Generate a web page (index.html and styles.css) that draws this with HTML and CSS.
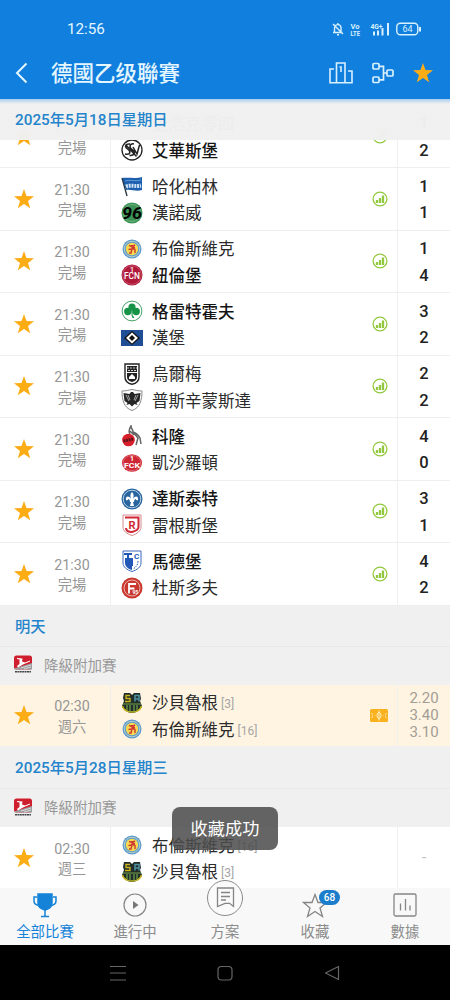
FILE: index.html
```html
<!DOCTYPE html>
<html lang="zh-CN">
<head>
    <meta charset="UTF-8">
    <title>德國乙级聯賽</title>
    <meta name="viewport" content="width=device-width, initial-scale=1">
    <link rel="stylesheet" href="styles.css">
</head>
<body>
<svg class="defs">
    <symbol id="star" viewBox="0 0 20 20"><path fill="#fcac14" d="M10 0l2.500 7.100 7.500.2-6 4.600 2.200 7.300L10 14.900l-6.200 4.300L6 11.900 0 7.300l7.500-.2z"/></symbol>
    <symbol id="chart" viewBox="0 0 16 16"><g fill="none" stroke="#93c83e"><circle cx="8" cy="8" r="6.900" stroke-width="1.300"/><path stroke-width="2.300" d="M5 12V9M8 12V7M11 12V4.500"/></g></symbol>
    <symbol id="elversberg" viewBox="0 0 22 22"><circle cx="11" cy="11" r="10" fill="#fff" stroke="#222" stroke-width="1.300"/><path fill="none" stroke="#222" stroke-width="1.500" d="M9 5C4 4.500 3.500 8 6.500 10s4 6-2.500 5M13 5c-5-1-5 4-1.500 6s2 6-3 5.500M12 8l4 7 2.500-9M4.500 5.500l11 12"/></symbol>
    <symbol id="hertha" viewBox="0 0 22 22"><path fill="#1d5fae" d="M1 3c7-1 13 1 20-1v13c-6 2-11-1-16 0z"/><path stroke="#234" stroke-width="1.300" d="M1 3l5 18"/><path stroke="#cfe2f5" stroke-width="4" stroke-dasharray="2 .8" fill="none" d="M5 11.500c5-2 10 .5 15-1"/><path stroke="#5c9bd8" d="M4 6c5-2 11 1 16-1" fill="none"/></symbol>
    <symbol id="hannover" viewBox="0 0 22 22"><circle cx="11" cy="11" r="10.500" fill="#3c9456"/><circle cx="11" cy="11" r="8.500" fill="none" stroke="#7bb98a" stroke-width=".8"/><text x="11" y="17" text-anchor="middle" textLength="20" lengthAdjust="spacingAndGlyphs" font-size="17" font-weight="bold" font-style="italic">96</text></symbol>
    <symbol id="braunschweig" viewBox="0 0 22 22"><circle cx="11" cy="11" r="9.500" fill="#5d9bd0"/><circle cx="11" cy="11" r="7.800" fill="none" stroke="#b8cfc2" stroke-width="1"/><circle cx="11" cy="11" r="6.200" fill="#f6d94f"/><path fill="none" stroke="#cf3a32" stroke-width="1.400" d="M8 7.500l3 1 3-1.500M11 7v4l-3.500.500M11 10l3 1.500v3.500M11 11l-1 4H8M14 9.500h-3"/></symbol>
    <symbol id="nuernberg" viewBox="0 0 22 22"><circle cx="11" cy="11" r="10.500" fill="#b0193a"/><circle cx="11" cy="11" r="9.300" fill="none" stroke="#cf7486" stroke-width=".6"/><text x="11" y="7.500" text-anchor="middle" font-size="7" fill="#fff">1</text><text x="11" y="14.500" text-anchor="middle" textLength="16" lengthAdjust="spacingAndGlyphs" font-size="8.500" font-weight="500" fill="#fff">FCN</text></symbol>
    <symbol id="fuerth" viewBox="0 0 22 22"><circle cx="11" cy="11" r="9.900" fill="#fff" stroke="#46a36a" stroke-width="1"/><g fill="#159447"><circle cx="11" cy="7" r="3.600"/><circle cx="6.800" cy="11.500" r="3.700"/><circle cx="15.200" cy="11.500" r="3.700"/><path d="M10.500 9h1.500l-.5 6 2 3h-2l-1-3z"/></g></symbol>
    <symbol id="hsv" viewBox="0 0 22 22"><path fill="#1f4e94" d="M0 3h22v16H0z"/><path fill="#111" d="M11 4l8 7-8 7-8-7z"/><path fill="#fff" d="M11 5.500l6 5.500-6 5.500L5 11z"/><path fill="#111" d="M11 8l3 3-3 3-3-3z"/></symbol>
    <symbol id="ulm" viewBox="0 0 22 22"><path fill="#fff" stroke="#222" stroke-width="1.400" d="M4 1h14v13c0 4-3 6.500-7 7.300-4-.8-7-3.300-7-7.300z"/><path fill="#222" d="M6 3h10v6H6z"/><path stroke="#fff" stroke-width=".8" stroke-dasharray="2 1" d="M6 5h10M7 7.500h8"/><path fill="#222" d="M6 10h10v4c0 3-2 4-5 5-3-1-5-2-5-5z"/><path fill="#fff" d="M8 16v-2l3-3 3 3v2z"/></symbol>
    <symbol id="preussen" viewBox="0 0 22 22"><path fill="#fff" stroke="#888" d="M1 2c4 0 7-1 10-1.500 3 .5 6 1.500 10 1.500 0 9-2 17-10 19.500C3 19 1 11 1 2z"/><path fill="#262626" d="M2.500 4l6 1 1.500-2h2l1.500 2 6-1-1 8-3 2 1 2-3-1-2.500 2.500L8.500 15l-3 1 1-2-3-2z"/><path stroke="#fff" stroke-width=".6" d="M5 6l3 6M7 6l2 5M17 6l-3 6M15 6l-2 5"/></symbol>
    <symbol id="koeln" viewBox="0 0 22 22"><path fill="none" stroke="#666" stroke-width="1.500" d="M9 9C7 6 8 4 10 1c0 3 2 3 2 6 3 1 5 2 7 6l1 6M12 7l5 6-2 7M9 6l4 4"/><circle cx="7.500" cy="15" r="6.300" fill="#d71f2c"/><path stroke="#631219" stroke-width="3" stroke-dasharray="2 .6" d="M2.500 16l10-2"/></symbol>
    <symbol id="lautern" viewBox="0 0 22 22"><ellipse cx="11" cy="11" rx="10" ry="8.800" fill="#cf2634"/><ellipse cx="11" cy="11" rx="8.800" ry="7.600" fill="none" stroke="#e18b91" stroke-width=".6"/><text x="11" y="9" text-anchor="middle" font-size="7" font-weight="bold" fill="#fff">1</text><text x="11" y="16" text-anchor="middle" textLength="16" lengthAdjust="spacingAndGlyphs" font-size="8" font-weight="bold" fill="#fff">FCK</text></symbol>
    <symbol id="darmstadt" viewBox="0 0 22 22"><circle cx="11" cy="11" r="10.500" fill="#28649e"/><circle cx="11" cy="11" r="8.800" fill="none" stroke="#b1cee5"/><path fill="#fff" d="M11 4c2 2 2 4 1 7 2-4 6-3 5 1-1 1-2 0-2-1-1 0-2 1-2 3h-1l1 4h-4l1-4H9c0-2-1-3-2-3 0 1-1 2-2 1-1-4 3-5 5-1-1-3-1-5 1-7z"/></symbol>
    <symbol id="regensburg" viewBox="0 0 22 22"><path fill="#fff" stroke="#d98a90" d="M2 1h18v12c0 4-4 7-9 8.500C6 20 2 17 2 13z"/><path fill="none" stroke="#d02835" stroke-width="2" d="M4 3.500h13.500V13c0 3-3 4-6.500 5-4 0-6-1-6-4"/><text x="11" y="14.500" text-anchor="middle" font-size="11" font-weight="bold" fill="#d02835">R</text></symbol>
    <symbol id="magdeburg" viewBox="0 0 22 22"><path fill="#fff" stroke="#3c69bd" d="M2 1h18v12c0 4-4 7-9 8.500C6 20 2 17 2 13z"/><path fill="#2158b7" d="M3 3h8v2H8v3h4v8h-1v4c-4-1-7-4-7-7V8h2V5H3z"/><text x="15.500" y="9" text-anchor="middle" font-size="8" font-weight="bold" fill="#2158b7">C</text><path stroke="#2158b7" stroke-dasharray="1.500 1" d="M17 11c0 4-2 6-5 8" fill="none"/></symbol>
    <symbol id="fortuna" viewBox="0 0 22 22"><circle cx="11" cy="11" r="10.500" fill="#c9372f"/><circle cx="11" cy="11" r="8" fill="none" stroke="#f3cfcc" stroke-width=".8"/><path fill="none" stroke="#fff" stroke-width="1.800" d="M8 16.500V7h7M8 11.500h5.500"/><text x="11.500" y="17" font-size="5" font-weight="bold" fill="#fff">95</text></symbol>
    <symbol id="saar" viewBox="0 0 22 22"><path fill="#202d28" d="M3 1h6l2 2 2-2h6l1 6-1 2 2 5c-1 4-6 7-10 7S2 18 1 14l2-5-1-3z"/><path fill="none" stroke="#c9b51f" stroke-width="1.400" d="M9 3.500H5v3h4v3H4M1.500 14c2 8 17 8 19 0"/><path fill="none" stroke="#4d91a1" stroke-width="1.500" d="M14 9.500v-6h4v6M14 7h4"/><path stroke="#75a34b" stroke-width="1.200" d="M2 12h18M6 13v5M9 13v7M13 13v7M16 13v5"/></symbol>
    <symbol id="bundesliga" viewBox="0 0 18 18"><rect width="18" height="14" y=".5" rx="2.500" fill="#cf1f2e"/><path fill="#9a9da0" d="M0 13.500L18 8v6.500H1z"/><path fill="#fff" d="M3 11l2.500-2V4.500L3 4V3l5.500.5L8 6.500l3 1 5-2v1L9 9.500l-5 3z"/><path stroke="#fff" stroke-width=".6" d="M7 13l10-3M10 14l7-2"/><path stroke="#44474a" stroke-width="1.500" stroke-dasharray="2 .4" d="M1 16.700h16"/></symbol>
</svg>

<div class="app">
    <header class="top">
        <div class="status">
            <span class="clock">12:56</span>
            <svg class="status-icons" width="94" height="18" viewBox="0 0 94 18" fill="none" stroke="#d9f1ff">
                <path stroke-width="1.400" d="M2 12.500h9.500M3.500 12V8.500c0-5 6-5 6.500-1v5M6 14.700h2M2 4l10 10M6.800 4V3"/>
                <text x="19.500" y="8.800" textLength="9" lengthAdjust="spacingAndGlyphs" class="tiny">Vo</text>
                <text x="19.500" y="15.500" textLength="9.500" lengthAdjust="spacingAndGlyphs" class="tiny">LTE</text>
                <text x="39.500" y="9" textLength="12" lengthAdjust="spacingAndGlyphs" class="tiny">4G+</text>
                <path stroke-width="2" d="M43 15.500v-4M47 15.500v-5M51.500 15.500V8M57 15.500V3"/>
                <rect x="65.800" y="3.300" width="21" height="11.500" rx="3.500" stroke-width="1.400"/>
                <path stroke-width="2" d="M89 7v4.500"/>
                <text x="76.500" y="12.300" text-anchor="middle" class="tiny thin">64</text>
            </svg>
        </div>
        <div class="title-bar">
            <svg class="back" width="14" height="22" viewBox="0 0 14 22"><path d="M11.500 1.500L2 11l9.500 9.500" fill="none" stroke="#e4f6ff" stroke-width="2"/></svg>
            <h1>德國乙级聯賽</h1>
            <svg class="podium" width="24" height="22" viewBox="0 0 24 22" fill="none" stroke="#d9f1ff" stroke-width="1.600"><path d="M7.500 20.700V1h8.500v19.700M5 7H1v13.700h22V9h-4M10.500 5h1.500v5"/></svg>
            <svg class="bracket" width="22" height="22" viewBox="0 0 22 22" fill="none" stroke="#d9f1ff" stroke-width="1.700"><rect x="1" y="1.500" width="6" height="5.500" rx="1"/><rect x="1" y="15" width="6" height="5.500" rx="1"/><rect x="15" y="8" width="6" height="6" rx="1"/><path d="M7 4.300h4.500v13.500H7M11.500 11H15"/></svg>
            <svg class="star"><use href="#star"/></svg>
        </div>
    </header>

    <main class="list">
        <div class="date sticky">2025年5月18日星期日</div>
        <div class="match first">
            <svg class="star"><use href="#star"/></svg>
            <div class="time"><span>21:30</span><span>完場</span></div>
            <div class="teams">
                <div class="team"><i class="no-logo"></i>史浩克零四</div>
                <div class="team win"><svg class="logo"><use href="#elversberg"/></svg>艾華斯堡</div>
            </div>
            <svg class="chart"><use href="#chart"/></svg>
            <div class="score"><span>1</span><span>2</span></div>
        </div>
        <div class="match">
            <svg class="star"><use href="#star"/></svg>
            <div class="time"><span>21:30</span><span>完場</span></div>
            <div class="teams">
                <div class="team"><svg class="logo"><use href="#hertha"/></svg>哈化柏林</div>
                <div class="team"><svg class="logo"><use href="#hannover"/></svg>漢諾威</div>
            </div>
            <svg class="chart"><use href="#chart"/></svg>
            <div class="score"><span>1</span><span>1</span></div>
        </div>
        <div class="match">
            <svg class="star"><use href="#star"/></svg>
            <div class="time"><span>21:30</span><span>完場</span></div>
            <div class="teams">
                <div class="team"><svg class="logo"><use href="#braunschweig"/></svg>布倫斯維克</div>
                <div class="team win"><svg class="logo"><use href="#nuernberg"/></svg>紐倫堡</div>
            </div>
            <svg class="chart"><use href="#chart"/></svg>
            <div class="score"><span>1</span><span>4</span></div>
        </div>
        <div class="match">
            <svg class="star"><use href="#star"/></svg>
            <div class="time"><span>21:30</span><span>完場</span></div>
            <div class="teams">
                <div class="team win"><svg class="logo"><use href="#fuerth"/></svg>格雷特霍夫</div>
                <div class="team"><svg class="logo"><use href="#hsv"/></svg>漢堡</div>
            </div>
            <svg class="chart"><use href="#chart"/></svg>
            <div class="score"><span>3</span><span>2</span></div>
        </div>
        <div class="match">
            <svg class="star"><use href="#star"/></svg>
            <div class="time"><span>21:30</span><span>完場</span></div>
            <div class="teams">
                <div class="team"><svg class="logo"><use href="#ulm"/></svg>烏爾梅</div>
                <div class="team"><svg class="logo"><use href="#preussen"/></svg>普斯辛蒙斯達</div>
            </div>
            <svg class="chart"><use href="#chart"/></svg>
            <div class="score"><span>2</span><span>2</span></div>
        </div>
        <div class="match">
            <svg class="star"><use href="#star"/></svg>
            <div class="time"><span>21:30</span><span>完場</span></div>
            <div class="teams">
                <div class="team win"><svg class="logo"><use href="#koeln"/></svg>科隆</div>
                <div class="team"><svg class="logo"><use href="#lautern"/></svg>凱沙羅頓</div>
            </div>
            <svg class="chart"><use href="#chart"/></svg>
            <div class="score"><span>4</span><span>0</span></div>
        </div>
        <div class="match">
            <svg class="star"><use href="#star"/></svg>
            <div class="time"><span>21:30</span><span>完場</span></div>
            <div class="teams">
                <div class="team win"><svg class="logo"><use href="#darmstadt"/></svg>達斯泰特</div>
                <div class="team"><svg class="logo"><use href="#regensburg"/></svg>雷根斯堡</div>
            </div>
            <svg class="chart"><use href="#chart"/></svg>
            <div class="score"><span>3</span><span>1</span></div>
        </div>
        <div class="match">
            <svg class="star"><use href="#star"/></svg>
            <div class="time"><span>21:30</span><span>完場</span></div>
            <div class="teams">
                <div class="team win"><svg class="logo"><use href="#magdeburg"/></svg>馬德堡</div>
                <div class="team"><svg class="logo"><use href="#fortuna"/></svg>杜斯多夫</div>
            </div>
            <svg class="chart"><use href="#chart"/></svg>
            <div class="score"><span>4</span><span>2</span></div>
        </div>

        <div class="date">明天</div>
        <div class="league"><svg class="league-logo"><use href="#bundesliga"/></svg>降級附加賽</div>
        <div class="match marked">
            <svg class="star"><use href="#star"/></svg>
            <div class="time"><span>02:30</span><span>週六</span></div>
            <div class="teams">
                <div class="team"><svg class="logo"><use href="#saar"/></svg>沙貝魯根<small>[3]</small></div>
                <div class="team"><svg class="logo"><use href="#braunschweig"/></svg>布倫斯維克<small>[16]</small></div>
            </div>
            <svg class="field" width="18" height="13" viewBox="0 0 18 13" fill="none"><rect width="18" height="13" rx="1.500" fill="#f9b11e"/><path stroke="#fff0c4" d="M9 1.500v10"/><path stroke="#fbd27a" d="M1 4.500h1.500v4H1M17 4.500h-1.500v4H17M4.500 6.500h1M12.500 6.500h1"/><ellipse cx="9" cy="6.500" rx="2" ry="3" stroke="#fff0c4"/></svg>
            <div class="odds"><span>2.20</span><span>3.40</span><span>3.10</span></div>
        </div>

        <div class="date second">2025年5月28日星期三</div>
        <div class="league"><svg class="league-logo"><use href="#bundesliga"/></svg>降級附加賽</div>
        <div class="match">
            <svg class="star"><use href="#star"/></svg>
            <div class="time"><span>02:30</span><span>週三</span></div>
            <div class="teams">
                <div class="team"><svg class="logo"><use href="#braunschweig"/></svg>布倫斯維克<small>[16]</small></div>
                <div class="team"><svg class="logo"><use href="#saar"/></svg>沙貝魯根<small>[3]</small></div>
            </div>
            <div class="odds empty"><span>-</span></div>
        </div>
    </main>

    <nav class="tabs">
        <a class="tab active">
            <svg width="26" height="26" viewBox="0 0 26 26" fill="none" stroke="#1583d8" stroke-width="1.500"><path fill="#1583d8" d="M6 2h14v9c0 4-3 6-7 7-4-1-7-3-7-7z"/><path d="M5 5H2v4c0 3 2 4 5 4.500M21 5h3v4c0 3-2 4-5 4.500M13 17v7M9 24.500h8"/></svg>
            全部比賽
        </a>
        <a class="tab">
            <svg width="26" height="26" viewBox="0 0 26 26" fill="none" stroke="#858585" stroke-width="1.200"><circle cx="13" cy="13" r="11"/><path fill="#777" stroke="none" d="M11 9l5.500 4-5.500 4z"/></svg>
            進行中
        </a>
        <a class="tab">
            <span class="plan"><svg width="36" height="36" viewBox="0 0 36 36" fill="none" stroke="#858585" stroke-width="1.300"><path d="M10.500 8h16v18.500l-4-3.200h-4.500l-7.500 3.200zM14 12.500h9M14 16.500h9M14 20h5"/></svg></span>
            方案
        </a>
        <a class="tab">
            <svg width="26" height="26" viewBox="0 0 26 26" fill="none" stroke="#858585" stroke-width="1.300"><path d="M13 2.500l3 8h8.500l-6.500 5.500 2.500 8.500L13 19.500l-7.500 5L8 16 1.500 10.500H10z"/></svg>
            <b class="badge">68</b>
            收藏
        </a>
        <a class="tab">
            <svg width="26" height="26" viewBox="0 0 26 26" fill="none" stroke="#858585" stroke-width="1.300"><rect x="2" y="2" width="22" height="22" rx="1.500"/><path d="M8.500 18.500v-7M13.500 18.500V7M18 18.500v-5"/></svg>
            數據
        </a>
    </nav>

    <footer class="system">
        <svg width="18" height="18" viewBox="0 0 18 18"><path d="M1 2.500h16M1 9h16M1 16h16"/></svg>
        <svg width="18" height="18" viewBox="0 0 18 18"><rect x="2" y="2.500" width="14" height="13.500" rx="3.500"/></svg>
        <svg width="18" height="18" viewBox="0 0 18 18"><path d="M15.500 2.500v13L2.500 9z" stroke-linejoin="round"/></svg>
    </footer>

    <div class="toast">收藏成功</div>
</div>
</body>
</html>
```
FILE: styles.css
```css
*{
    margin: 0;
    padding: 0;
    box-sizing: border-box;
}
body{
    font-family: Roboto, "Noto Sans CJK SC", sans-serif;
    background: #fff;
}
svg{
    display: block;
    flex: none;
}
.defs{
    display: none;
}
.app{
    position: relative;
    width: 450px;
    height: 1000px;
    overflow: hidden;
    display: flex;
    flex-direction: column;
}

/* header */
.top{
    flex: none;
    height: 99px;
    background: #107fdd;
    color: #e4f6ff;
}
.status{
    height: 47px;
    padding: 11px 25px 0 67px;
    display: flex;
    align-items: center;
    justify-content: space-between;
}
.clock{
    font-size: 15.200px;
}
.tiny{
    font-size: 8px;
    font-weight: bold;
    fill: #d9f1ff;
    stroke: none;
}
.tiny.thin{
    font-size: 9px;
    font-weight: normal;
}
.title-bar{
    height: 52px;
    padding: 0 17px 0 15px;
    display: flex;
    align-items: center;
}
.title-bar h1{
    flex: 1;
    margin-left: 22px;
    padding-top: 2px;
    font-size: 21.500px;
    line-height: 30px;
    font-weight: 500;
}
.podium{
    margin-right: 19px;
}
.bracket{
    margin-right: 19px;
}
.star{
    width: 20px;
    height: 20px;
}

/* match list */
.list{
    position: relative;
    flex: none;
    height: 789px;
    padding-top: 6.500px;
    overflow: hidden;
}
.date{
    height: 40px;
    padding-left: 15px;
    font-size: 15.300px;
    line-height: 43px;
    font-weight: 500;
    color: #2484cb;
    background: #f0f0f0;
}
.date.second{
    height: 41px;
    line-height: 42px;
}
.sticky{
    position: absolute;
    top: 0;
    left: 0;
    z-index: 1;
    width: 100%;
    height: 41px;
    background: linear-gradient(#a9cfef, rgba(240,240,240,.98) 5px);
}
.league{
    height: 39px;
    padding: 0 0 3px 14px;
    display: flex;
    align-items: center;
    border-top: 1px solid #e8e8e8;
    background: #f0f0f0;
    font-size: 14.500px;
    color: #999;
}
.league-logo{
    width: 18px;
    height: 18px;
    margin-right: 12px;
}
.match{
    height: 62.500px;
    padding-left: 14px;
    display: flex;
    align-items: center;
    border-bottom: 1px solid #eee;
}
.match.marked{
    background: #fff4e2;
}
.time{
    width: 76px;
    padding-top: 3px;
    display: flex;
    flex-direction: column;
    text-align: center;
    font-size: 14.300px;
    line-height: 20.500px;
    color: #969696;
}
.teams{
    align-self: stretch;
    flex: 1;
    padding: 6.300px 0 0 10px;
    border-left: 1px solid #f0f0f0;
}
.team{
    height: 26.500px;
    display: flex;
    align-items: center;
    font-size: 16.500px;
    line-height: 26px;
    color: #2b2b2b;
    white-space: nowrap;
}
.team.win{
    font-weight: 500;
    color: #151515;
}
.logo,
.no-logo{
    flex: none;
    width: 22px;
    height: 22px;
    margin: 0 9px 3px 0;
}
.team small{
    margin-left: 3px;
    font-size: 12px;
    color: #a5a5a5;
}
.chart{
    width: 16px;
    height: 16px;
    margin-right: 9px;
}
.field{
    margin-right: 9px;
}
.score,
.odds{
    align-self: stretch;
    width: 53px;
    display: flex;
    flex-direction: column;
    justify-content: center;
    border-left: 1px solid #f0f0f0;
    text-align: center;
}
.score{
    padding-top: 3px;
    font-size: 16.500px;
    line-height: 26.500px;
    font-weight: 500;
    color: #222;
}
.odds{
    font-size: 15px;
    line-height: 17px;
    color: #a39e95;
}
.odds.empty{
    color: #bbb;
}

/* bottom tabs */
.tabs{
    position: relative;
    flex: none;
    height: 57px;
    display: flex;
    background: #f8f8f8;
}
.tab{
    position: relative;
    flex: 1;
    padding-top: 4px;
    display: flex;
    flex-direction: column;
    align-items: center;
    font-size: 14.400px;
    line-height: 30px;
    color: #8c8c8c;
}
.tab.active{
    color: #1583d8;
}
.plan{
    position: relative;
    width: 36px;
    height: 36px;
    margin: -12px 0 2px;
    border: 1.500px solid #8a8a8a;
    border-radius: 50%;
    background: #fafafa;
}
.plan svg{
    margin: -1px 0 0 -1px;
}
/* white rim above the bar */
.plan::before{
    content: "";
    position: absolute;
    z-index: -1;
    top: -7px;
    left: -7px;
    width: 48px;
    height: 48px;
    border-radius: 50%;
    background: #fff;
    clip-path: inset(0 0 33px 0);
}
.badge{
    position: absolute;
    top: 2px;
    left: 49px;
    width: 21px;
    height: 15px;
    border-radius: 8px;
    background: #1b7dcc;
    color: #fff;
    font-size: 10px;
    line-height: 15px;
    font-weight: 500;
    text-align: center;
}

/* system keys */
.system{
    flex: none;
    height: 55px;
    padding: 0 109px;
    display: flex;
    align-items: center;
    justify-content: space-between;
    background: #000;
}
.system svg{
    fill: none;
    stroke: #666;
    stroke-width: 1.200;
}

.toast{
    position: absolute;
    top: 807px;
    left: 172px;
    z-index: 2;
    width: 106px;
    height: 43px;
    border-radius: 8px;
    background: rgba(76,76,76,.86);
    color: #fff;
    font-size: 17.200px;
    line-height: 44px;
    text-align: center;
}
```
